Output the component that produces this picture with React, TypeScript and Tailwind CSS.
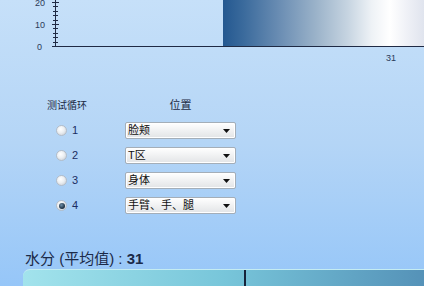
import React from 'react';

const rows = [
  { n: '1', place: '脸颊', checked: false },
  { n: '2', place: 'T区', checked: false },
  { n: '3', place: '身体', checked: false },
  { n: '4', place: '手臂、手、腿', checked: true },
];

function Chart() {
  const ticks: number[] = [];
  for (let k = 0; k <= 10; k++) ticks.push(k);
  return (
    <svg width={424} height={66} className="block shrink-0">
      <defs>
        <linearGradient id="bar" x1="0" x2="1" y1="0" y2="0">
          <stop offset="0" stopColor="#245890" />
          <stop offset="0.1" stopColor="#3a6a9c" />
          <stop offset="0.28" stopColor="#6a8db3" />
          <stop offset="0.46" stopColor="#9ab2c9" />
          <stop offset="0.62" stopColor="#c6d4e1" />
          <stop offset="0.74" stopColor="#eef2f6" />
          <stop offset="0.83" stopColor="#ffffff" />
          <stop offset="0.92" stopColor="#eef0f6" />
          <stop offset="1" stopColor="#e0e4ee" />
        </linearGradient>
      </defs>
      <rect x={223} y={0} width={201} height={46} fill="url(#bar)" />
      <line x1={55.5} y1={0} x2={55.5} y2={47} stroke="#1f2a44" strokeWidth={1} />
      <line x1={55} y1={46.5} x2={424} y2={46.5} stroke="#1f2a44" strokeWidth={1} />
      {ticks.map((k) => {
        const y = Math.round(46 - k * 4.4) + 0.5;
        const major = k % 5 === 0;
        return (
          <line
            key={k}
            x1={major ? 52 : 53}
            x2={major ? 59 : 58}
            y1={y}
            y2={y}
            stroke="#1f2a44"
            strokeWidth={1}
          />
        );
      })}
      <g fontFamily="'Liberation Sans', sans-serif" fontSize={9} fill="#2b3a58" textAnchor="end">
        <text x={45} y={5.5}>20</text>
        <text x={45} y={27.5}>10</text>
        <text x={42} y={49.5}>0</text>
        <text x={396} y={61} textAnchor="end">31</text>
      </g>
    </svg>
  );
}

function Radio({ checked }: { checked: boolean }) {
  return (
    <span className="relative flex h-[11px] w-[11px] shrink-0 items-center justify-center rounded-full border border-[#b4bdc8] bg-[radial-gradient(circle_at_40%_35%,#ffffff_0%,#eceff2_45%,#c3c9d0_100%)]">
      {checked && (
        <span className="h-[6px] w-[6px] rounded-full bg-[radial-gradient(circle_at_40%_35%,#6f8fa8_0%,#24384c_60%,#10202e_100%)]" />
      )}
    </span>
  );
}

function Select({ value }: { value: string }) {
  return (
    <div className="flex h-[17px] w-[111px] items-center justify-between rounded-[2px] border border-[#a4aeb8] bg-gradient-to-b from-[#ffffff] to-[#e2e4e6] pl-[2px] pr-[5px] shadow-[inset_0_0_0_1px_#ffffff]">
      <span className="text-[11px] leading-none text-[#111]">{value}</span>
      <svg width={7} height={4} viewBox="0 0 7 4">
        <path d="M0 0 H7 L3.5 4 Z" fill="#111" />
      </svg>
    </div>
  );
}

export default function App() {
  return (
    <div className="flex h-[286px] w-[424px] flex-col overflow-hidden bg-gradient-to-b from-[#c6e0f9] via-[#b4d5f6] to-[#96c6f8] font-['Liberation_Sans','Noto_Sans_CJK_SC',sans-serif]">
      <Chart />

      {/* Cycle / position form */}
      <div className="pl-[47px] pt-[32px]">
        <div className="flex h-[14px] items-center text-[#1c2a44]">
          <span className="w-[78px] text-[10px]">测试循环</span>
          <span className="w-[111px] text-center text-[11px]">位置</span>
        </div>
        <div className="mt-[10px] flex flex-col gap-[8px]">
          {rows.map((r) => (
            <div key={r.n} className="flex h-[17px] items-center">
              <div className="flex w-[78px] items-center pl-[9px]">
                <Radio checked={r.checked} />
                <span className="ml-[5px] text-[11px] leading-none text-[#1b2d62]">{r.n}</span>
              </div>
              <Select value={r.place} />
            </div>
          ))}
        </div>
      </div>

      {/* Moisture */}
      <div className="mt-[36px] h-[18px] pl-[25px] text-[15px] leading-[18px] text-[#1b2a48]">
        水分 (平均值) : <span className="font-bold">31</span>
      </div>
      <div className="ml-[23px] mt-[1px] flex flex-1 rounded-tl-[7px] border-t border-[#c4ecf2] bg-gradient-to-r from-[#a2e3ec] via-[#78c6da] to-[#5592b8]">
        <div className="w-[221px]" />
        <div className="w-[2px] bg-[#16233a]" />
      </div>
    </div>
  );
}
